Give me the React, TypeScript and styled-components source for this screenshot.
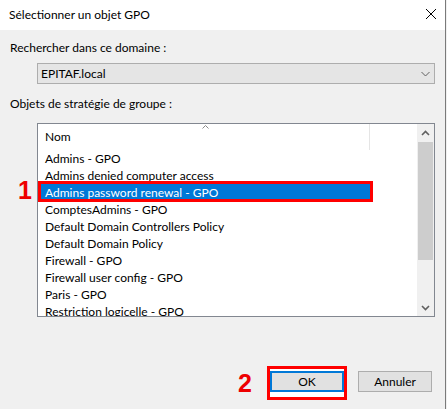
import styled, { createGlobalStyle } from "styled-components";

const GlobalStyle = createGlobalStyle`
  html, body {
    margin: 0;
    padding: 0;
    background: #f0f0f0;
  }
  body {
    font-family: Lato, "Noto Sans", sans-serif;
    font-size: 12px;
    color: #000;
  }
`;

const items = [
  "Admins - GPO",
  "Admins denied computer access",
  "Admins password renewal - GPO",
  "ComptesAdmins - GPO",
  "Default Domain Controllers Policy",
  "Default Domain Policy",
  "Firewall - GPO",
  "Firewall user config - GPO",
  "Paris - GPO",
  "Restriction logicelle - GPO",
];

export default function App() {
  return (
    <Window>
      <GlobalStyle />
      <TitleBar>
        <Title>Sélectionner un objet GPO</Title>
        <CloseIcon width="12" height="12" viewBox="0 0 12 12">
          <path d="M1 1 L11 11 M11 1 L1 11" stroke="#000" strokeWidth="1" />
        </CloseIcon>
      </TitleBar>

      <Content>
        <Label>Rechercher dans ce domaine :</Label>
        <Combo>
          <span>EPITAF.local</span>
          <svg width="9" height="6" viewBox="0 0 9 6">
            <path d="M0.5 1 L4.5 5 L8.5 1" fill="none" stroke="#606060" strokeWidth="1" />
          </svg>
        </Combo>

        <Label $top={12}>Objets de stratégie de groupe :</Label>
        <ListArea>
          <Step $left={-19} $top={55}>1</Step>
          <ListBox>
            <ListMain>
              <Header>
                <HeaderCell>
                  Nom
                  <SortCaret width="7" height="4" viewBox="0 0 7 4">
                    <path d="M0.5 3.5 L3.5 0.5 L6.5 3.5" fill="none" stroke="#8a8a8a" strokeWidth="1" />
                  </SortCaret>
                </HeaderCell>
              </Header>
              {items.map((item, i) => (
                <Row key={item} $selected={i === 2}>
                  {item}
                  {i === 2 && <Mark />}
                </Row>
              ))}
            </ListMain>
            <ScrollBar>
              <ScrollArrow>
                <svg width="9" height="6" viewBox="0 0 9 6">
                  <path d="M1 5 L4.5 1.5 L8 5" fill="none" stroke="#606060" strokeWidth="1.6" />
                </svg>
              </ScrollArrow>
              <Track>
                <Thumb />
              </Track>
              <ScrollArrow>
                <svg width="9" height="6" viewBox="0 0 9 6">
                  <path d="M1 1 L4.5 4.5 L8 1" fill="none" stroke="#606060" strokeWidth="1.6" />
                </svg>
              </ScrollArrow>
            </ScrollBar>
          </ListBox>
        </ListArea>
      </Content>

      <Footer>
        <Highlight>
          <Step $left={-32} $top={2}>2</Step>
          <Button $default>OK</Button>
        </Highlight>
        <Button>Annuler</Button>
      </Footer>
    </Window>
  );
}

const Window = styled.div`
  width: 445px;
  height: 409px;
  border-right: 1px solid #7a7a7a;
  background: #f0f0f0;
  display: flex;
  flex-direction: column;
  overflow: hidden;
`;

const TitleBar = styled.div`
  height: 30px;
  background: #fff;
  display: flex;
  align-items: center;
  justify-content: space-between;
  padding: 0 8px 2px 9px;
  box-sizing: border-box;
`;

const Title = styled.span`
  font-size: 12px;
`;

const CloseIcon = styled.svg`
  display: block;
`;

const Content = styled.div`
  padding: 0 10px 0 10px;
  display: flex;
  flex-direction: column;
`;

const Label = styled.div<{ $top?: number }>`
  margin-top: ${(p) => p.$top ?? 10}px;
  height: 16px;
  line-height: 16px;
`;

const Combo = styled.div`
  margin: 7px 0 0 27px;
  height: 21px;
  box-sizing: border-box;
  border: 1px solid #adadad;
  background: #e5e5e5;
  display: flex;
  align-items: center;
  justify-content: space-between;
  padding: 0 4px 0 3px;
`;

const ListArea = styled.div`
  position: relative;
  margin: 11px 0 0 27px;
`;

const ListBox = styled.div`
  height: 194px;
  box-sizing: border-box;
  border: 1px solid #828790;
  background: #fff;
  display: flex;
  overflow: hidden;
`;

const ListMain = styled.div`
  flex: 1;
  display: flex;
  flex-direction: column;
`;

const Header = styled.div`
  height: 26px;
  flex-shrink: 0;
  display: flex;
`;

const HeaderCell = styled.div`
  position: relative;
  width: 332px;
  box-sizing: border-box;
  border-right: 1px solid #e5e5e5;
  padding: 5px 0 0 7px;
  line-height: 16px;
`;

const SortCaret = styled.svg`
  position: absolute;
  left: 164px;
  top: 1px;
`;

const Row = styled.div<{ $selected?: boolean }>`
  position: relative;
  flex-shrink: 0;
  margin-left: 3px;
  width: 329px;
  height: 17px;
  line-height: 17px;
  padding-left: 4px;
  box-sizing: border-box;
  white-space: nowrap;
  background: ${(p) => (p.$selected ? "#0078d7" : "transparent")};
  color: ${(p) => (p.$selected ? "#fff" : "#000")};
`;

const Mark = styled.span`
  position: absolute;
  left: -3px;
  right: -3px;
  top: -3px;
  bottom: -1px;
  border: 3px solid #ff0000;
`;

const Step = styled.span<{ $left: number; $top: number }>`
  position: absolute;
  z-index: 1;
  left: ${(p) => p.$left}px;
  top: ${(p) => p.$top}px;
  font-family: "Liberation Sans", Arial, sans-serif;
  font-weight: bold;
  font-size: 25px;
  line-height: 25px;
  color: #ee0000;
`;

const ScrollBar = styled.div`
  width: 17px;
  background: #f0f0f0;
  display: flex;
  flex-direction: column;
`;

const ScrollArrow = styled.div`
  height: 17px;
  display: flex;
  align-items: center;
  justify-content: center;
`;

const Track = styled.div`
  flex: 1;
  padding: 1px 1px 0 1px;
`;

const Thumb = styled.div`
  height: 118px;
  background: #cdcdcd;
`;

const Footer = styled.div`
  margin-top: 54px;
  display: flex;
  justify-content: flex-end;
  align-items: flex-start;
  gap: 13px;
  padding-right: 13px;
`;

const Highlight = styled.div`
  position: relative;
  margin: -5px -2px -8px -3px;
  padding: 2px 0 5px 0;
  border: 3px solid #ff0000;
  background: #fff;
  display: flex;
`;

const Button = styled.button<{ $default?: boolean }>`
  width: 74px;
  height: 21px;
  box-sizing: border-box;
  font-family: Lato, "Noto Sans", sans-serif;
  font-size: 12px;
  color: #000;
  background: #e1e1e1;
  border: ${(p) => (p.$default ? "2px solid #0078d7" : "1px solid #adadad")};
  padding: 0;
  margin: 0;
`;
